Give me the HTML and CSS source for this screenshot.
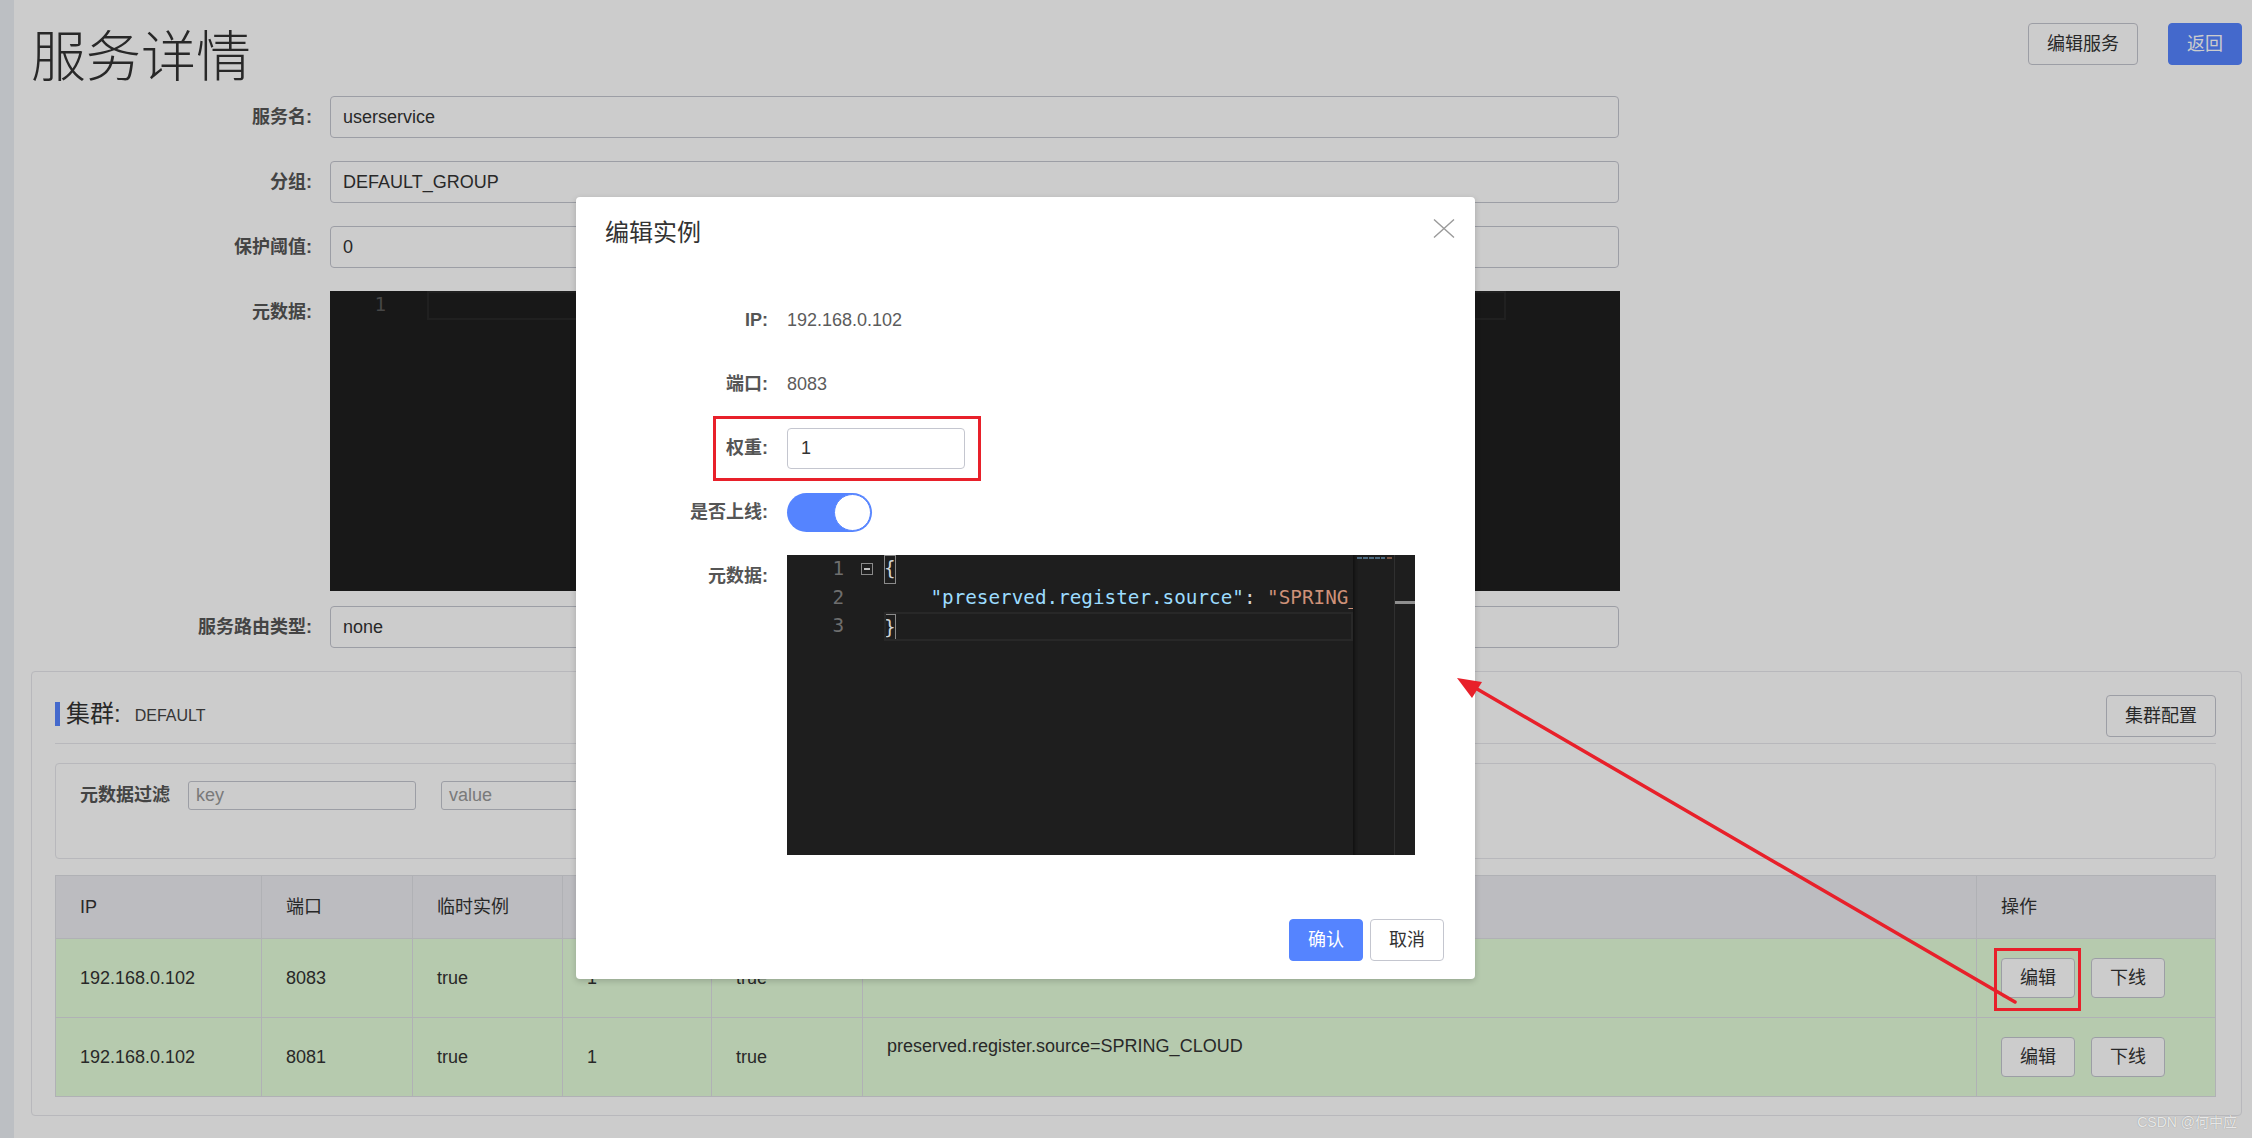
FILE: index.html
```html
<!DOCTYPE html>
<html lang="zh-CN">
<head>
<meta charset="utf-8">
<title>服务详情</title>
<link rel="stylesheet" href="styles.css">
</head>
<body>
<div class="app">
  <aside class="sidebar"></aside>
  <main class="main">
    <header class="page-head">
      <h1 class="page-title">服务详情</h1>
      <div class="head-actions">
        <button class="btn">编辑服务</button>
        <button class="btn btn-primary">返回</button>
      </div>
    </header>

    <div class="detail-form">
      <div class="form-item">
        <label class="form-label">服务名:</label>
        <div class="text-input">userservice</div>
      </div>
      <div class="form-item">
        <label class="form-label">分组:</label>
        <div class="text-input">DEFAULT_GROUP</div>
      </div>
      <div class="form-item">
        <label class="form-label">保护阈值:</label>
        <div class="text-input">0</div>
      </div>
      <div class="form-item form-item-editor">
        <label class="form-label">元数据:</label>
        <div class="code-editor code-editor-page">
          <div class="ce-main">
            <div class="ce-line">
              <span class="ce-ln">1</span><span class="ce-fold"></span><span class="ce-code ce-current"></span>
            </div>
          </div>
          <div class="ce-minimap ce-minimap-wide"></div>
          <div class="ce-scroll"></div>
        </div>
      </div>
      <div class="form-item">
        <label class="form-label">服务路由类型:</label>
        <div class="text-input">none</div>
      </div>
    </div>

    <section class="cluster-card">
      <div class="cluster-head">
        <div class="cluster-title">
          <span class="cluster-bar"></span>
          <span class="cluster-label">集群:</span>
          <span class="cluster-name">DEFAULT</span>
        </div>
        <button class="btn">集群配置</button>
      </div>

      <div class="filter-box">
        <span class="filter-label">元数据过滤</span>
        <div class="small-input placeholder">key</div>
        <div class="small-input placeholder">value</div>
      </div>

      <table class="instance-table">
        <colgroup>
          <col class="c-ip"><col class="c-port"><col class="c-eph"><col class="c-weight"><col class="c-health"><col class="c-meta"><col class="c-op">
        </colgroup>
        <thead>
          <tr><th>IP</th><th>端口</th><th>临时实例</th><th>权重</th><th>健康状态</th><th>元数据</th><th>操作</th></tr>
        </thead>
        <tbody>
          <tr>
            <td>192.168.0.102</td><td>8083</td><td>true</td><td>1</td><td>true</td>
            <td class="meta-cell">preserved.register.source=SPRING_CLOUD</td>
            <td><div class="row-actions"><button class="btn btn-row">编辑</button><button class="btn btn-row">下线</button></div></td>
          </tr>
          <tr>
            <td>192.168.0.102</td><td>8081</td><td>true</td><td>1</td><td>true</td>
            <td class="meta-cell">preserved.register.source=SPRING_CLOUD</td>
            <td><div class="row-actions"><button class="btn btn-row">编辑</button><button class="btn btn-row">下线</button></div></td>
          </tr>
        </tbody>
      </table>
    </section>
  </main>
</div>

<div class="mask"></div>

<div class="dialog">
  <div class="dialog-header">编辑实例</div>
  <button class="dialog-close" aria-label="close">
    <svg width="22" height="19" viewBox="0 0 22 19"><path d="M1 0.5 L21 18.5 M21 0.5 L1 18.5" stroke="#9a9a9a" stroke-width="1.4" fill="none"/></svg>
  </button>
  <div class="dialog-body">
    <div class="d-item">
      <label class="d-label">IP:</label>
      <div class="d-value">192.168.0.102</div>
    </div>
    <div class="d-item">
      <label class="d-label">端口:</label>
      <div class="d-value">8083</div>
    </div>
    <div class="d-item">
      <label class="d-label">权重:</label>
      <div class="d-input">1</div>
    </div>
    <div class="d-item">
      <label class="d-label">是否上线:</label>
      <div class="switch"><span class="switch-knob"></span></div>
    </div>
    <div class="d-item d-item-top">
      <label class="d-label">元数据:</label>
      <div class="code-editor code-editor-dialog">
        <div class="ce-main">
          <div class="ce-line">
            <span class="ce-ln">1</span><span class="ce-fold"><span class="fold-icon"></span></span><span class="ce-code"><span class="bm">{</span></span>
          </div>
          <div class="ce-line">
            <span class="ce-ln">2</span><span class="ce-fold"></span><span class="ce-code">    <span class="tk-key">"preserved.register.source"</span><span class="tk-punc">: </span><span class="tk-str">"SPRING_CLOUD"</span></span>
          </div>
          <div class="ce-line">
            <span class="ce-ln">3</span><span class="ce-fold"></span><span class="ce-code ce-current"><span class="bm">}</span></span>
          </div>
        </div>
        <div class="ce-minimap">
          <div class="mm-row"><span class="mm-key"></span><span class="mm-str"></span></div>
        </div>
        <div class="ce-scroll"><span class="ce-cursor-mark"></span></div>
      </div>
    </div>
  </div>
  <div class="dialog-footer">
    <button class="btn btn-primary">确认</button>
    <button class="btn">取消</button>
  </div>
</div>

<svg class="annotations" width="2252" height="1138" viewBox="0 0 2252 1138">
  <rect x="714.5" y="417.5" width="265" height="62" fill="none" stroke="#e8202a" stroke-width="3"/>
  <rect x="1995.5" y="949.5" width="84" height="60" fill="none" stroke="#e8202a" stroke-width="3"/>
  <line x1="2015" y1="1002" x2="1472" y2="686" stroke="#e8202a" stroke-width="3.5" stroke-linecap="round"/>
  <polygon points="1457,678 1482,682 1472,698" fill="#e8202a"/>
</svg>

<div class="watermark">CSDN @何中应</div>
</body>
</html>
```

FILE: styles.css
```css
* { box-sizing: border-box; }

html, body { margin: 0; padding: 0; }

body {
  position: relative;
  width: 2252px;
  height: 1138px;
  overflow: hidden;
  background: #ffffff;
  color: #333333;
  font-family: "Liberation Sans", "Noto Sans CJK SC", sans-serif;
  font-size: 18px;
}

button { font-family: inherit; }

.app {
  display: flex;
  min-height: 1138px;
}

.sidebar {
  flex: none;
  width: 14px;
  background: #ebeff4;
}

.main {
  flex: 1;
  padding: 0 11px 0 17px;
}

/* header */
.page-head {
  display: flex;
  justify-content: space-between;
  align-items: flex-start;
  height: 96px;
  padding-top: 24px;
}

.page-title {
  margin: 0;
  height: 56px;
  font-family: "Noto Sans CJK SC", sans-serif;
  font-size: 55px;
  line-height: 56px;
  font-weight: 300;
  color: #333333;
}

.head-actions {
  display: flex;
  gap: 30px;
  margin-top: -1px;
}

.btn {
  height: 42px;
  padding: 0 18px;
  border: 1px solid #c4c6cf;
  border-radius: 4px;
  background: #ffffff;
  color: #333333;
  font-size: 18px;
  line-height: 40px;
  white-space: nowrap;
}

.btn-primary {
  background: #5584ff;
  border-color: #5584ff;
  color: #ffffff;
}

/* detail form */
.form-item {
  display: flex;
  align-items: flex-start;
  gap: 18px;
  margin-bottom: 23px;
}

.form-item-editor {
  margin-bottom: 15px;
}

.form-label {
  flex: none;
  width: 281px;
  height: 42px;
  text-align: right;
  font-weight: 700;
  color: #555555;
  line-height: 42px;
}

.text-input {
  width: 1289px;
  height: 42px;
  padding: 0 12px;
  border: 1px solid #c4c6cf;
  border-radius: 4px;
  line-height: 40px;
  color: #333333;
}

/* code editor */
.code-editor {
  display: flex;
  height: 300px;
  background: #1e1e1e;
  font-family: "DejaVu Sans Mono", "Liberation Mono", monospace;
  font-size: 19.3px;
  overflow: hidden;
}

.code-editor-page {
  width: 1290px;
}

.code-editor-dialog {
  width: 628px;
}

.ce-main {
  flex: 1;
  min-width: 0;
  overflow: hidden;
}

.ce-line {
  display: flex;
  height: 28.5px;
  line-height: 28.5px;
}

.ce-ln {
  flex: none;
  width: 57px;
  text-align: right;
  color: #6e6e6e;
}

.code-editor-page .ce-ln {
  width: 56px;
  color: #585858;
}

.ce-fold {
  flex: none;
  width: 40px;
  display: flex;
  align-items: center;
  padding-left: 17px;
}

.code-editor-page .ce-fold {
  width: 41px;
}

.fold-icon {
  position: relative;
  width: 12px;
  height: 12px;
  border: 1px solid #8a8a8a;
}

.fold-icon::after {
  content: "";
  position: absolute;
  left: 2px;
  right: 2px;
  top: 4px;
  height: 2px;
  background: #c0c0c0;
}

.ce-code {
  flex: 1;
  white-space: pre;
  color: #d4d4d4;
  overflow: hidden;
}

.ce-current {
  border: 2px solid #282828;
}

.bm {
  display: inline-block;
  height: 28.5px;
  outline: 1px solid #8a8a8a;
  outline-offset: -1px;
  color: #d4d4d4;
}

.ce-current .bm {
  margin: -2px 0 0 -2px;
}

.tk-key { color: #9cdcfe; }
.tk-punc { color: #d4d4d4; }
.tk-str { color: #ce9178; }

.ce-minimap {
  flex: none;
  width: 41px;
  background: #1e1e1e;
  box-shadow: inset 3px 0 3px -1px #111111;
  padding: 2px 0 0 4px;
}

.ce-minimap-wide {
  width: 93px;
  box-shadow: none;
}

.mm-row {
  display: flex;
  gap: 2px;
}

.mm-key {
  width: 28px;
  height: 2px;
  background: repeating-linear-gradient(90deg, #4e6b80 0 5px, transparent 5px 6px);
}

.mm-str {
  width: 5px;
  height: 2px;
  background: #7a5646;
}

.ce-scroll {
  flex: none;
  width: 21px;
  border-left: 1px solid #303030;
  padding-top: 46px;
}

.code-editor-page .ce-scroll {
  border-left: none;
}

.ce-cursor-mark {
  display: block;
  height: 3px;
  background: #8f8f8f;
}

/* cluster card */
.cluster-card {
  margin-top: 22px;
  padding: 0 25px 18px 23px;
  border: 1px solid #e6e7eb;
  border-radius: 4px;
}

.cluster-head {
  display: flex;
  justify-content: space-between;
  align-items: center;
  height: 72px;
  padding: 23px 0 6px;
  border-bottom: 1px solid #e6e7eb;
}

.cluster-title {
  display: flex;
  align-items: center;
  height: 30px;
  margin-top: -4px;
}

.cluster-bar {
  width: 5px;
  height: 24px;
  background: #5584ff;
  margin-right: 6px;
}

.cluster-label {
  font-size: 24px;
  line-height: 30px;
  height: 30px;
  color: #333333;
}

.cluster-name {
  margin-left: 14px;
  margin-top: 4px;
  font-size: 16px;
  line-height: 20px;
  color: #444444;
}

.filter-box {
  display: flex;
  align-items: flex-start;
  gap: 18px;
  height: 96px;
  margin-top: 19px;
  padding: 17px 24px 0;
  border: 1px solid #e6e7eb;
  border-radius: 4px;
}

.filter-label {
  width: 90px;
  height: 29px;
  font-weight: 700;
  color: #555555;
  line-height: 29px;
}

.small-input {
  width: 228px;
  height: 29px;
  padding: 0 7px;
  border: 1px solid #c4c6cf;
  border-radius: 3px;
  line-height: 27px;
}

.small-input + .small-input {
  margin-left: 7px;
}

.placeholder {
  color: #999999;
}

/* table */
.instance-table {
  width: 2160px;
  margin-top: 16px;
  border-collapse: collapse;
  table-layout: fixed;
}

.c-ip { width: 206px; }
.c-port { width: 151px; }
.c-eph { width: 150px; }
.c-weight { width: 149px; }
.c-health { width: 151px; }
.c-meta { width: 1114px; }
.c-op { width: 239px; }

.instance-table th,
.instance-table td {
  border: 1px solid #dcdee3;
  padding: 0 24px;
  text-align: left;
  font-weight: 400;
  color: #333333;
  white-space: nowrap;
  line-height: 24px;
}

.instance-table th {
  height: 63px;
  background: #ebecf0;
}

.instance-table td {
  height: 79px;
  background: #e4fdda;
}

.instance-table td.meta-cell {
  vertical-align: top;
  padding-top: 16px;
}

.row-actions {
  display: flex;
  gap: 16px;
}

.btn-row {
  height: 40px;
  line-height: 38px;
}

/* mask + dialog */
.mask {
  position: absolute;
  inset: 0;
  background: rgba(0, 0, 0, 0.2);
}

.dialog {
  position: absolute;
  left: 576px;
  top: 197px;
  width: 899px;
  background: #ffffff;
  border-radius: 4px;
  box-shadow: 0 2px 6px rgba(0, 0, 0, 0.18);
}

.dialog-header {
  height: 54px;
  padding: 18px 29px 0;
  font-size: 24px;
  line-height: 36px;
  color: #333333;
}

.dialog-close {
  position: absolute;
  top: 22px;
  right: 20px;
  width: 22px;
  height: 19px;
  padding: 0;
  border: none;
  background: none;
}

.dialog-close svg { display: block; }

.dialog-body {
  padding: 48px 31px 0;
}

.d-item {
  display: flex;
  align-items: center;
  gap: 19px;
  height: 42px;
  margin-bottom: 22px;
}

.d-item-top {
  align-items: flex-start;
  height: auto;
  margin-bottom: 0;
}

.d-label {
  flex: none;
  width: 161px;
  height: 42px;
  text-align: right;
  font-weight: 700;
  color: #555555;
  line-height: 42px;
}

.d-value {
  color: #5c5c5c;
}

.d-input {
  width: 178px;
  height: 41px;
  padding: 0 13px;
  border: 1px solid #c4c6cf;
  border-radius: 4px;
  line-height: 39px;
  color: #333333;
}

.switch {
  display: flex;
  justify-content: flex-end;
  align-items: center;
  width: 85px;
  height: 39px;
  padding: 1px;
  border-radius: 20px;
  background: #5584ff;
}

.switch-knob {
  width: 37px;
  height: 37px;
  border-radius: 50%;
  background: #ffffff;
  border: 1px solid #5584ff;
}

.dialog-footer {
  display: flex;
  justify-content: flex-end;
  gap: 7px;
  padding: 64px 31px 18px;
}

/* annotations */
.annotations {
  position: absolute;
  left: 0;
  top: 0;
  pointer-events: none;
}

.watermark {
  position: absolute;
  right: 15px;
  bottom: 7px;
  font-size: 14px;
  line-height: 18px;
  color: rgba(255, 255, 255, 0.8);
  text-shadow: 0 0 1px rgba(0, 0, 0, 0.35);
}
```
